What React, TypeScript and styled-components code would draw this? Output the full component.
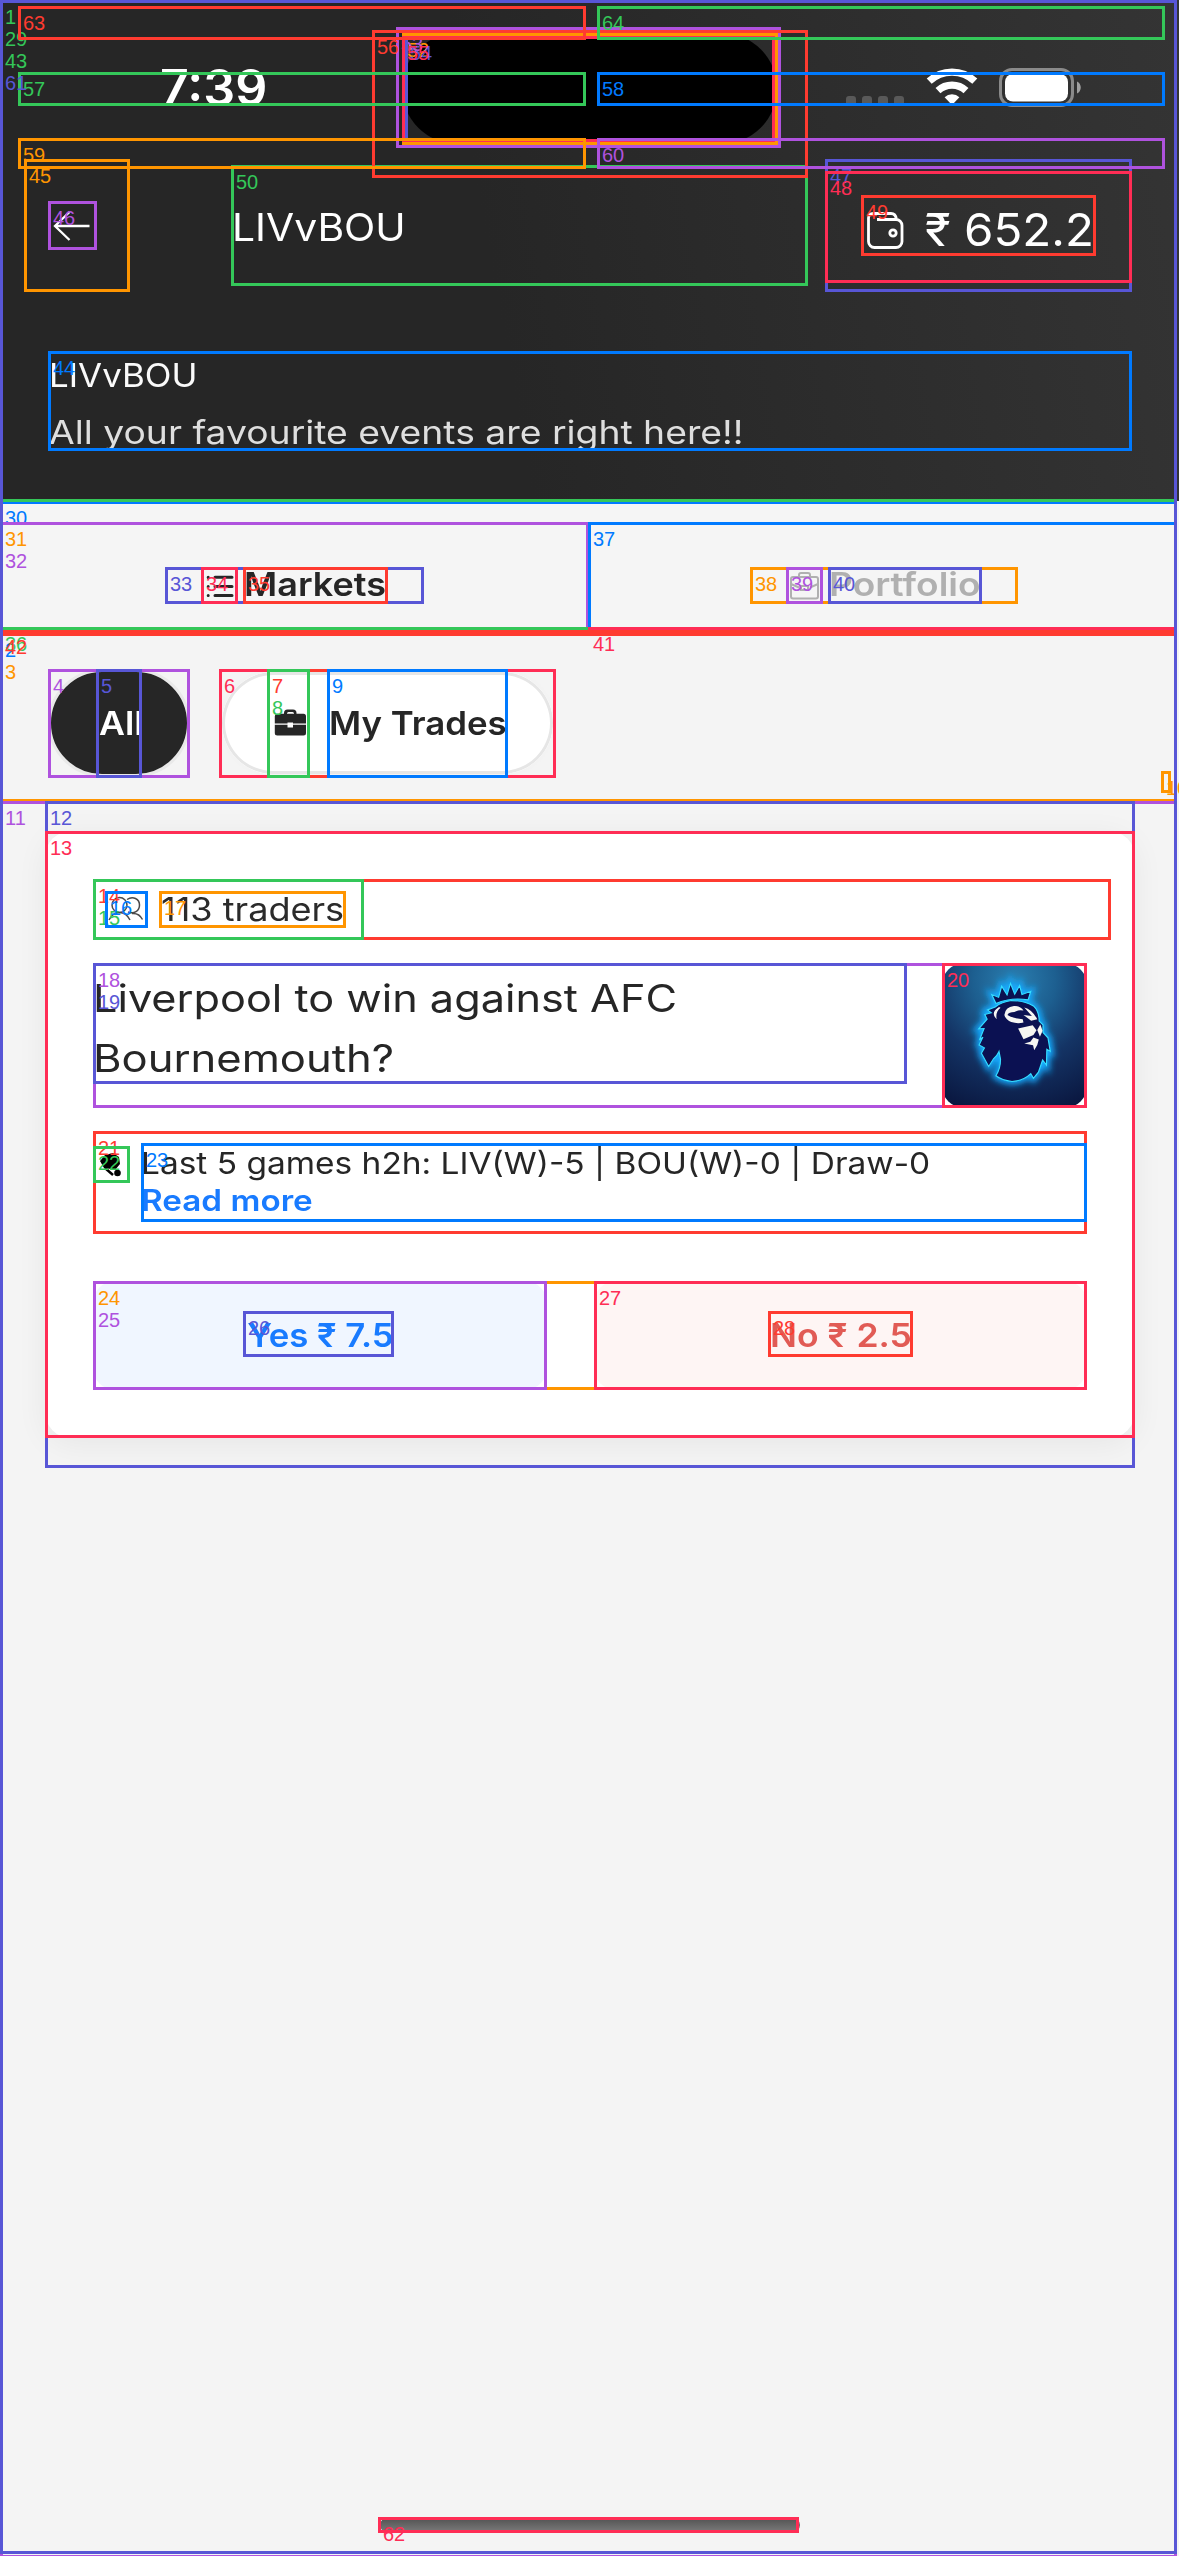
import React from 'react';
import styled, { createGlobalStyle } from 'styled-components';

const GlobalStyle = createGlobalStyle`
  * { box-sizing: border-box; }
  body { margin: 0; background: #f5f5f5; }
`;

const Screen = styled.main`
  position: relative;
  width: 1179px;
  height: 2556px;
  overflow: hidden;
  display: flex;
  flex-direction: column;
  background: #f4f4f4;
  color: #262626;
  font-family: Inter, 'Noto Sans', sans-serif;
`;

const Text = styled.span<{
  $size: number;
  $line: number;
  $stretch?: number;
  $weight?: number;
  $color?: string;
  $centered?: boolean;
}>`
  display: block;
  white-space: nowrap;
  font-size: ${(p) => p.$size}px;
  line-height: ${(p) => p.$line}px;
  transform: scaleX(${(p) => p.$stretch ?? 1});
  transform-origin: ${(p) => (p.$centered ? 'center' : 'left')};
  font-weight: ${(p) => p.$weight ?? 400};
  color: ${(p) => p.$color ?? 'inherit'};
`;

/* ---------- header ---------- */

const Header = styled.header`
  height: 501px;
  background: linear-gradient(80deg, #262626 42%, #343434 100%);
  color: #fff;
`;

const StatusBar = styled.div`
  height: 159px;
  display: grid;
  grid-template-columns: 402px 375px 1fr;
  align-items: start;
`;

const Clock = styled.div`
  padding: 58px 0 0 160px;
`;

const Island = styled.div`
  height: 111px;
  margin-top: 33px;
  border-radius: 56px;
  background: #000;
`;

const StatusIcons = styled.div`
  display: flex;
  align-items: flex-start;
  padding: 68px 0 0 69px;
  & > svg + svg { margin-left: 21px; }
`;

const SignalDots = styled.div`
  display: flex;
  gap: 6px;
  padding-top: 28px;
  margin-right: 22px;
`;

const Dot = styled.i`
  width: 10px;
  height: 10px;
  border-radius: 3px;
  background: #595959;
`;

const NavBar = styled.div`
  height: 133px;
  display: flex;
  align-items: center;
  padding-left: 24px;
`;

const BackButton = styled.div`
  width: 106px;
  height: 133px;
  padding: 42px 0 0 24px;
`;

const NavTitle = styled.div`
  width: 594px;
  margin-left: 102px;
  padding: 4px 0 0 0;
`;

const Wallet = styled.div`
  display: flex;
  align-items: center;
  gap: 16px;
  padding: 9px 0 0 35px;
`;

const Intro = styled.div`
  padding: 54px 48px 0 49px;
`;

/* ---------- tabs ---------- */

const Tabs = styled.nav`
  height: 132px;
  padding-top: 21px;
  display: grid;
  grid-template-columns: 589px 589px;
  background: #f5f5f5;
`;

const Tab = styled.div<{ $color: string }>`
  height: 108px;
  display: flex;
  justify-content: center;
  padding-top: 41px;
  color: ${(p) => p.$color};
`;

const TabContent = styled.div<{ $width: number }>`
  width: ${(p) => p.$width}px;
  height: 42px;
  padding-left: 36px;
  display: flex;
  gap: 7px;
  & svg { margin-top: 5px; }
`;

/* ---------- filter chips ---------- */

const Chips = styled.div`
  height: 168px;
  padding: 36px 48px 0;
  display: flex;
  gap: 29px;
`;

const Chip = styled.div<{ $width: number; $dark?: boolean }>`
  width: ${(p) => p.$width}px;
  height: 108px;
  border: 3px solid ${(p) => (p.$dark ? '#e9e9e9' : '#f3f3f3')};
  box-shadow: ${(p) => (p.$dark ? 'none' : 'inset 0 0 0 3px #e6e6e6')};
  border-radius: 54px;
  background: ${(p) => (p.$dark ? '#262626' : '#fff')};
  color: ${(p) => (p.$dark ? '#fff' : '#262626')};
  display: flex;
  align-items: center;
  padding-left: ${(p) => (p.$dark ? 48 : 52)}px;
  gap: 22px;
`;

/* ---------- market card ---------- */

const MarketList = styled.section`
  padding: 30px 45px;
`;

const Card = styled.article`
  width: 1090px;
  height: 607px;
  padding: 48px;
  border-radius: 26px;
  background: #fff;
  box-shadow: 0 6px 32px rgba(0, 0, 0, 0.06);
  display: flex;
  flex-direction: column;
`;

const Traders = styled.div`
  height: 61px;
  display: flex;
  align-items: center;
  padding-left: 12px;
  gap: 13px;
`;

const QuestionRow = styled.div`
  height: 145px;
  margin-top: 23px;
  display: flex;
  justify-content: space-between;
`;

const Question = styled.div`
  padding: 6px 0 0 0;
`;

const League = styled.svg`
  width: 145px;
  height: 145px;
  border-radius: 22px;
`;

const InfoRow = styled.div`
  height: 103px;
  margin-top: 23px;
  padding-top: 13px;
  display: flex;
  gap: 11px;
`;

const InfoIcon = styled.svg`
  width: 37px;
  height: 37px;
  margin-top: 2px;
`;

const InfoCopy = styled.div`
  display: flex;
  flex-direction: column;
  align-items: flex-start;
`;

const Options = styled.div`
  margin-top: 47px;
  display: grid;
  grid-template-columns: 454px 493px;
  gap: 47px;
`;

const Option = styled.div<{ $tint: string }>`
  height: 109px;
  padding-bottom: 2px;
  border-radius: 22px;
  background: ${(p) => p.$tint};
  display: flex;
  align-items: center;
  justify-content: center;
`;

const HomeIndicator = styled.div`
  width: 420px;
  height: 14px;
  margin: auto 0 24px 380px;
  border-radius: 7px;
  background: linear-gradient(#525252, #7a7a7a);
`;

/* ---------- numbered region markers over the screen ---------- */

const Marker = styled.div<{ $box: number[]; $color: string }>`
  position: absolute;
  left: ${(p) => p.$box[0]}px;
  top: ${(p) => p.$box[1]}px;
  width: ${(p) => p.$box[2] - p.$box[0]}px;
  height: ${(p) => p.$box[3] - p.$box[1]}px;
  border: 3px solid ${(p) => p.$color};
  color: ${(p) => p.$color};
`;

const MarkerLabel = styled.span<{ $row: number }>`
  position: absolute;
  left: 2px;
  top: ${(p) => 3 + p.$row * 22}px;
  font: 20px/22px 'Liberation Sans', Arial, sans-serif;
`;

const palette = ['#ff3b30', '#34c759', '#007aff', '#ff9500', '#af52de', '#5856d6', '#ff2d55'];

// id, left, top, right, bottom, label row
const regions: [number, number, number, number, number, number?][] = [
  [1, 0, 0, 1177, 2554],
  [2, 0, 633, 1177, 2558],
  [3, 0, 633, 1177, 802, 1],
  [4, 48, 669, 190, 778],
  [5, 96, 669, 142, 778],
  [6, 219, 669, 556, 778],
  [7, 267, 669, 508, 778],
  [8, 267, 669, 310, 778, 1],
  [9, 327, 669, 508, 778],
  [10, 1161, 771, 1171, 793],
  [11, 0, 801, 1177, 2558],
  [12, 45, 801, 1135, 1468],
  [13, 45, 831, 1135, 1438],
  [14, 93, 879, 1111, 940],
  [15, 93, 879, 364, 940, 1],
  [16, 105, 891, 148, 928],
  [17, 159, 891, 346, 928],
  [18, 93, 963, 1087, 1108],
  [19, 93, 963, 907, 1084, 1],
  [20, 942, 963, 1087, 1108],
  [21, 93, 1131, 1087, 1234],
  [22, 93, 1146, 130, 1183],
  [23, 141, 1143, 1087, 1222],
  [24, 93, 1281, 1087, 1390],
  [25, 93, 1281, 547, 1390, 1],
  [26, 243, 1311, 394, 1357],
  [27, 594, 1281, 1087, 1390],
  [28, 768, 1311, 913, 1357],
  [29, 0, 0, 1177, 502, 1],
  [30, 0, 501, 1177, 633],
  [31, 0, 522, 1177, 630],
  [32, 0, 522, 589, 630, 1],
  [33, 165, 567, 424, 604],
  [34, 201, 567, 238, 604],
  [35, 243, 567, 388, 604],
  [36, 0, 627, 589, 633],
  [37, 588, 522, 1177, 630],
  [38, 750, 567, 1018, 604],
  [39, 786, 567, 823, 604],
  [40, 828, 567, 982, 604],
  [41, 588, 627, 1177, 633],
  [42, 0, 630, 1177, 634],
  [43, 0, 0, 1177, 502, 2],
  [44, 48, 351, 1132, 451],
  [45, 24, 159, 130, 292],
  [46, 48, 201, 97, 250],
  [47, 825, 159, 1132, 292],
  [48, 825, 171, 1132, 283],
  [49, 861, 195, 1096, 256],
  [50, 231, 165, 808, 286],
  [52, 402, 33, 778, 145],
  [53, 396, 27, 781, 148],
  [54, 405, 36, 775, 142],
  [55, 402, 36, 775, 142],
  [56, 372, 30, 808, 178],
  [57, 18, 72, 586, 106],
  [58, 597, 72, 1165, 106],
  [59, 18, 138, 586, 169],
  [60, 597, 138, 1165, 169],
  [61, 0, 0, 1177, 2554, 3],
  [62, 378, 2517, 799, 2533],
  [63, 18, 6, 586, 40],
  [64, 597, 6, 1165, 40],
];

/* ---------- icons ---------- */

const WifiIcon = () => (
  <svg width="52" height="38" viewBox="0 0 52 38" fill="none" stroke="#fff">
    <path d="M3.2 13.2A33 33 0 0 1 48.8 13.2" strokeWidth="7.2" />
    <path d="M12 22.6A20.5 20.5 0 0 1 40 22.6" strokeWidth="7.2" />
    <path d="M26 37l-7.4-7.7a10.5 10.5 0 0 1 14.8 0z" fill="#fff" stroke="none" />
  </svg>
);

const BatteryIcon = () => (
  <svg width="84" height="40" viewBox="0 0 84 40">
    <rect x="1.5" y="1.5" width="72" height="36" rx="11.5" fill="none" stroke="#8a8a8a" strokeWidth="3" />
    <rect x="6" y="6" width="63" height="27.5" rx="8" fill="#fff" />
    <path d="M78 13.5c5 2 5 10 0 12z" fill="#a0a0a0" />
  </svg>
);

const BackIcon = () => (
  <svg width="49" height="49" viewBox="0 0 49 49" fill="none" stroke="#fff" strokeWidth="2.3">
    <path d="M41.5 25H7M21.5 11L7 25l14.5 14" />
  </svg>
);

const WalletIcon = () => (
  <svg width="48" height="48" viewBox="0 0 48 48" fill="none" stroke="#fff" strokeWidth="2.8">
    <path d="M16 13.500h19a6 6 0 0 1 6 6v16a6 6 0 0 1-6 6H13.500a6 6 0 0 1-6-6V12a4.500 4.500 0 0 1 4.500-4.500h18c3 0 5 2 5.500 6" />
    <circle cx="32" cy="27" r="3.2" />
  </svg>
);

const ListIcon = () => (
  <svg width="36" height="36" viewBox="0 0 36 36" fill="none" stroke="currentColor" strokeWidth="3" strokeLinecap="round">
    <path d="M14 9.300h17M14 18.500h17M14 27.500h17M7.200 9.300v.1M7.200 18.500v.1M7.200 27.500v.1" />
  </svg>
);

const PortfolioIcon = () => (
  <svg width="36" height="36" viewBox="0 0 36 36" fill="none" stroke="currentColor" strokeWidth="2">
    <rect x="5" y="9" width="27" height="21.500" rx="2" />
    <path d="M13 9V7a2 2 0 0 1 2-2h7a2 2 0 0 1 2 2v2M5 16l8 3.500M32 16l-8 3.500M15 18h7v4h-7z" />
  </svg>
);

const BriefcaseIcon = () => (
  <svg width="33" height="28" viewBox="0 0 33 28" fill="#262626">
    <path d="M10 6V4a3.500 3.500 0 0 1 3.500-3.500h5.500A3.500 3.500 0 0 1 22.500 4v2h-2.500V4.500a1.500 1.500 0 0 0-1.500-1.500h-4a1.500 1.500 0 0 0-1.500 1.500V6z" />
    <path d="M3 4.800h26.500a2.500 2.500 0 0 1 2.500 2.500v7.200H19v-1h-5.500v1H.8V7.300A2.500 2.500 0 0 1 3 4.800z" />
    <path d="M.8 15.800h12.700v2.700H19v-2.700h13V24a2.500 2.500 0 0 1-2.500 2.500H3.300A2.500 2.500 0 0 1 .8 24z" />
  </svg>
);

const TradersIcon = () => (
  <svg width="43" height="37" viewBox="0 0 43 37" fill="none" stroke="#4a4a4a" strokeWidth="1.500">
    <circle cx="14.500" cy="14" r="7.500" />
    <path d="M4 29c2.500-5 6-7.500 10.500-7.500S22.500 24 25 29" />
    <path d="M22 8.500c6-4 12.500-.5 12.500 5.500s-5.500 9.500-11.500 7M27 22.500c5-.5 8.500 2 10.500 6" />
  </svg>
);

const LeagueLogo = () => (
  <League viewBox="949 93 379 405" preserveAspectRatio="none">
    <defs>
      <radialGradient id="bg" cx="0.5" cy="0.12" r="0.95">
        <stop offset="0" stopColor="#2a7eb0" />
        <stop offset="0.3" stopColor="#1d5f90" />
        <stop offset="0.6" stopColor="#143465" />
        <stop offset="1" stopColor="#0a1740" />
      </radialGradient>
      <filter id="glow" x="-40%" y="-40%" width="180%" height="180%">
        <feGaussianBlur stdDeviation="9" />
      </filter>
      <g id="lion">
        <path d="M1090 206L1079 181L1097 189L1105 158L1119 182L1128 150L1139 180L1152 156L1158 181L1181 172L1174 196Q1130 188 1090 206Z" />
        <path d="M1088 216Q1105 202 1130 198Q1165 198 1188 213Q1203 228 1203 255L1213 266L1213 287L1226 302L1232 340L1223 334L1222 378L1212 364L1201 398L1188 415L1181 402Q1162 422 1132 424Q1106 421 1090 408Q1102 388 1102 362L1098 340Q1092 354 1084 360L1071 382L1052 345L1060 330L1046 322L1056 300L1047 308L1059 276L1045 277L1067 250L1061 237L1078 232L1068 224Z" />
      </g>
    </defs>
    <rect x="949" y="93" width="379" height="405" fill="url(#bg)" />
    <use href="#lion" fill="#12aaff" stroke="#12aaff" strokeWidth="18" filter="url(#glow)" />
    <use href="#lion" fill="#0b1152" stroke="#35dcff" strokeWidth="3" />
    <g fill="#f6f6f2">
      <path d="M1098 216Q1074 232 1092 250Q1088 230 1102 218Z" />
      <path d="M1112 238Q1114 216 1137 213Q1154 212 1162 226Q1150 222 1138 230Q1124 230 1120 238Q1134 248 1160 250L1162 259Q1148 264 1130 258Q1116 252 1112 238Z" />
      <path d="M1164 217Q1184 222 1198 250L1182 254L1162 238L1184 241Z" />
      <path d="M1148 276L1186 267L1196 281L1188 294L1162 306Z" />
      <path d="M1198 280L1206 265L1212 282L1205 299Z" />
      <path d="M1164 318L1180 313L1188 301L1202 307L1198 322L1190 337L1187 323Z" />
    </g>
  </League>
);

const PlayerIcon = () => (
  <InfoIcon viewBox="0 0 37 37" fill="#000">
    <path d="M12 9l8-2 6 4 1 7-5 6-4-1-7-1-4-7z" />
    <path d="M12 22l8 7" stroke="#000" strokeWidth="2.500" />
    <circle cx="24.500" cy="27" r="3.300" />
  </InfoIcon>
);

export default function App() {
  return (
    <Screen>
      <GlobalStyle />
      <Header>
        <StatusBar>
          <Clock><Text $size={51} $line={60} $weight={600} $stretch={0.984}>7:39</Text></Clock>
          <Island />
          <StatusIcons>
            <SignalDots><Dot /><Dot /><Dot /><Dot /></SignalDots>
            <WifiIcon />
            <BatteryIcon />
          </StatusIcons>
        </StatusBar>
        <NavBar>
          <BackButton><BackIcon /></BackButton>
          <NavTitle><Text $size={37.5} $line={48} $stretch={1.089}>LIVvBOU</Text></NavTitle>
          <Wallet>
            <WalletIcon />
            <Text $size={45} $line={54} $stretch={1.055}>₹ 652.2</Text>
          </Wallet>
        </NavBar>
        <Intro>
          <Text $size={33} $line={58} $stretch={1.057} $color="#fafafa">LIVvBOU</Text>
          <Text $size={32} $line={57} $stretch={1.165} $color="#dedede">All your favourite events are right here!!</Text>
        </Intro>
      </Header>

      <Tabs>
        <Tab $color="#262626">
          <TabContent $width={259}>
            <ListIcon />
            <Text $size={33} $line={42} $weight={600} $stretch={1.091}>Markets</Text>
          </TabContent>
        </Tab>
        <Tab $color="#b0b0b0">
          <TabContent $width={268}>
            <PortfolioIcon />
            <Text $size={33} $line={42} $weight={600} $stretch={1.123}>Portfolio</Text>
          </TabContent>
        </Tab>
      </Tabs>

      <Chips>
        <Chip $width={142} $dark><Text $size={33} $line={42} $weight={600} $stretch={1.08}>All</Text></Chip>
        <Chip $width={337}>
          <BriefcaseIcon />
          <Text $size={33} $line={42} $weight={600} $stretch={1.056}>My Trades</Text>
        </Chip>
      </Chips>

      <MarketList>
        <Card>
          <Traders>
            <TradersIcon />
            <Text $size={32} $line={40} $stretch={1.127} $color="#2b2b2b">113 traders</Text>
          </Traders>
          <QuestionRow>
            <Question>
              <Text $size={37.5} $line={60} $stretch={1.153}>Liverpool to win against AFC</Text>
              <Text $size={37.5} $line={60} $stretch={1.162}>Bournemouth?</Text>
            </Question>
            <LeagueLogo />
          </QuestionRow>
          <InfoRow>
            <PlayerIcon />
            <InfoCopy>
              <Text $size={30} $line={38} $stretch={1.115}>Last 5 games h2h: LIV(W)-5 | BOU(W)-0 | Draw-0</Text>
              <Text $size={29.5} $line={37} $weight={600} $stretch={1.127} $color="#197bff">Read more</Text>
            </InfoCopy>
          </InfoRow>
          <Options>
            <Option $tint="#f0f6ff"><Text $centered $size={33} $line={42} $weight={600} $stretch={1.054} $color="#197bff">Yes ₹ 7.5</Text></Option>
            <Option $tint="#fef5f4"><Text $centered $size={33} $line={42} $weight={600} $stretch={1.076} $color="#e15b55">No ₹ 2.5</Text></Option>
          </Options>
        </Card>
      </MarketList>

      <HomeIndicator />

      {regions.map(([id, l, t, r, b, row = 0]) => (
        <Marker key={id} $box={[l, t, r, b]} $color={palette[id % 7]}>
          <MarkerLabel $row={row}>{id}</MarkerLabel>
        </Marker>
      ))}
    </Screen>
  );
}
